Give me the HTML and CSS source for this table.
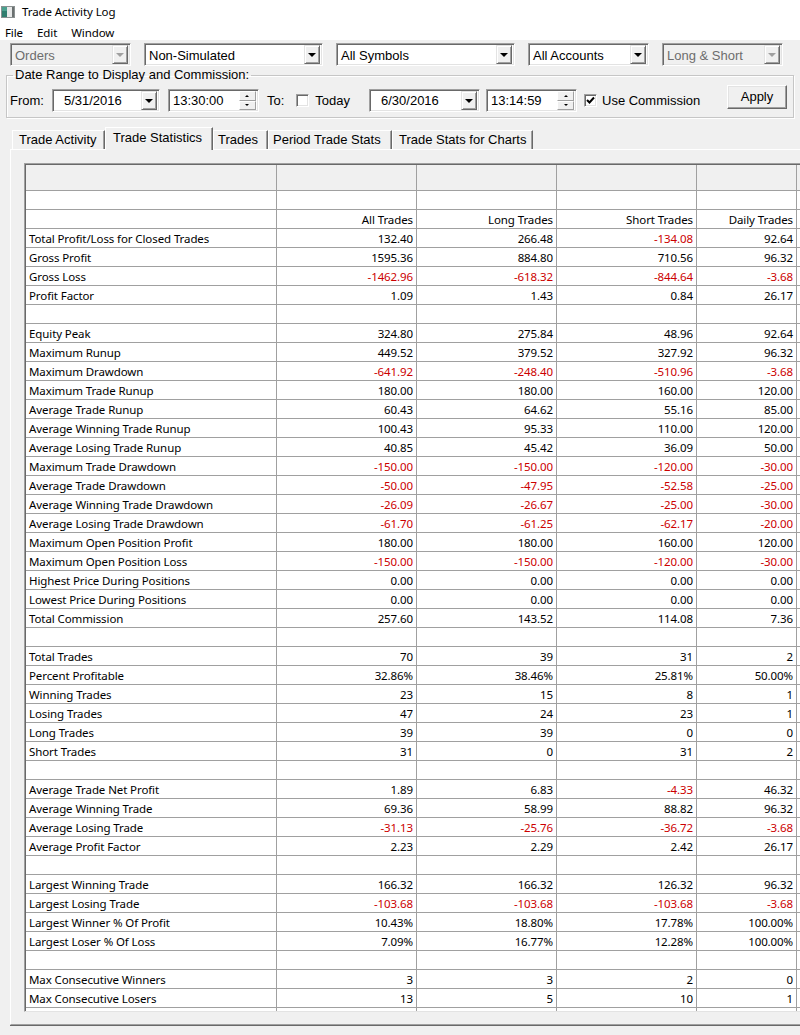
FILE: index.html
```html
<!DOCTYPE html>
<html>
<head>
<meta charset="utf-8">
<title>Trade Activity Log</title>
<link rel="stylesheet" href="styles.css">
</head>
<body>
<div class="titlebar">
  <svg class="app-icon" width="14" height="12" viewBox="0 0 14 12">
    <rect x="0.5" y="0.5" width="13" height="11" fill="#e6e8e8" stroke="#8a9090"/>
    <rect x="1" y="1" width="5" height="10" fill="#2f7d6e"/>
    <rect x="1" y="1" width="5" height="4" fill="#4aa08e"/>
    <rect x="11" y="1" width="2" height="10" fill="#6a7070"/>
  </svg>
  <span class="title">Trade Activity Log</span>
</div>
<div class="menubar">
  <span class="menu-item">File</span>
  <span class="menu-item">Edit</span>
  <span class="menu-item">Window</span>
</div>

<div class="filters">
  <div class="combo disabled w-orders"><span class="combo-text">Orders</span><span class="drop"><i class="tri"></i></span></div>
  <div class="combo w-wide"><span class="combo-text">Non-Simulated</span><span class="drop"><i class="tri"></i></span></div>
  <div class="combo w-wide"><span class="combo-text">All Symbols</span><span class="drop"><i class="tri"></i></span></div>
  <div class="combo w-narrow"><span class="combo-text">All Accounts</span><span class="drop"><i class="tri"></i></span></div>
  <div class="combo disabled w-narrow"><span class="combo-text">Long &amp; Short</span><span class="drop"><i class="tri"></i></span></div>
</div>

<fieldset class="range">
  <legend>Date Range to Display and Commission:</legend>
  <div class="range-row">
    <span class="lbl from">From:</span>
    <div class="field date d1"><span class="val">5/31/2016</span><span class="drop"><i class="tri"></i></span></div>
    <div class="field time t1"><span class="val">13:30:00</span><span class="spin"><span class="spin-btn"><i class="up"></i></span><span class="spin-btn"><i class="down"></i></span></span></div>
    <span class="lbl to">To:</span>
    <span class="check cb-today"></span>
    <span class="lbl today">Today</span>
    <div class="field date d2"><span class="val">6/30/2016</span><span class="drop"><i class="tri"></i></span></div>
    <div class="field time t2"><span class="val">13:14:59</span><span class="spin"><span class="spin-btn"><i class="up"></i></span><span class="spin-btn"><i class="down"></i></span></span></div>
    <span class="check checked cb-comm"><svg width="9" height="9" viewBox="0 0 9 9"><path d="M1 4 L3.5 6.5 L8 1.5" fill="none" stroke="#000" stroke-width="2"/></svg></span>
    <span class="lbl comm">Use Commission</span>
    <button class="apply">Apply</button>
  </div>
</fieldset>

<div class="tabs">
  <span class="tab tab-activity">Trade Activity</span>
  <span class="tab active tab-stats">Trade Statistics</span>
  <span class="tab tab-trades">Trades</span>
  <span class="tab tab-period">Period Trade Stats</span>
  <span class="tab tab-charts">Trade Stats for Charts</span>
</div>

<div class="panel">
  <div class="frame">
    <div class="row hdr"><span class="c"></span><span class="c"></span><span class="c"></span><span class="c"></span><span class="c"></span><span class="c"></span></div>
    <div class="row"><span class="c"></span><span class="c"></span><span class="c"></span><span class="c"></span><span class="c"></span><span class="c"></span></div>
    <div class="row"><span class="c l"></span><span class="c">All Trades</span><span class="c">Long Trades</span><span class="c">Short Trades</span><span class="c">Daily Trades</span><span class="c"></span></div>
    <div class="row"><span class="c l">Total Profit/Loss for Closed Trades</span><span class="c">132.40</span><span class="c">266.48</span><span class="c neg">-134.08</span><span class="c">92.64</span><span class="c"></span></div>
    <div class="row"><span class="c l">Gross Profit</span><span class="c">1595.36</span><span class="c">884.80</span><span class="c">710.56</span><span class="c">96.32</span><span class="c"></span></div>
    <div class="row"><span class="c l">Gross Loss</span><span class="c neg">-1462.96</span><span class="c neg">-618.32</span><span class="c neg">-844.64</span><span class="c neg">-3.68</span><span class="c"></span></div>
    <div class="row"><span class="c l">Profit Factor</span><span class="c">1.09</span><span class="c">1.43</span><span class="c">0.84</span><span class="c">26.17</span><span class="c"></span></div>
    <div class="row"><span class="c"></span><span class="c"></span><span class="c"></span><span class="c"></span><span class="c"></span><span class="c"></span></div>
    <div class="row"><span class="c l">Equity Peak</span><span class="c">324.80</span><span class="c">275.84</span><span class="c">48.96</span><span class="c">92.64</span><span class="c"></span></div>
    <div class="row"><span class="c l">Maximum Runup</span><span class="c">449.52</span><span class="c">379.52</span><span class="c">327.92</span><span class="c">96.32</span><span class="c"></span></div>
    <div class="row"><span class="c l">Maximum Drawdown</span><span class="c neg">-641.92</span><span class="c neg">-248.40</span><span class="c neg">-510.96</span><span class="c neg">-3.68</span><span class="c"></span></div>
    <div class="row"><span class="c l">Maximum Trade Runup</span><span class="c">180.00</span><span class="c">180.00</span><span class="c">160.00</span><span class="c">120.00</span><span class="c"></span></div>
    <div class="row"><span class="c l">Average Trade Runup</span><span class="c">60.43</span><span class="c">64.62</span><span class="c">55.16</span><span class="c">85.00</span><span class="c"></span></div>
    <div class="row"><span class="c l">Average Winning Trade Runup</span><span class="c">100.43</span><span class="c">95.33</span><span class="c">110.00</span><span class="c">120.00</span><span class="c"></span></div>
    <div class="row"><span class="c l">Average Losing Trade Runup</span><span class="c">40.85</span><span class="c">45.42</span><span class="c">36.09</span><span class="c">50.00</span><span class="c"></span></div>
    <div class="row"><span class="c l">Maximum Trade Drawdown</span><span class="c neg">-150.00</span><span class="c neg">-150.00</span><span class="c neg">-120.00</span><span class="c neg">-30.00</span><span class="c"></span></div>
    <div class="row"><span class="c l">Average Trade Drawdown</span><span class="c neg">-50.00</span><span class="c neg">-47.95</span><span class="c neg">-52.58</span><span class="c neg">-25.00</span><span class="c"></span></div>
    <div class="row"><span class="c l">Average Winning Trade Drawdown</span><span class="c neg">-26.09</span><span class="c neg">-26.67</span><span class="c neg">-25.00</span><span class="c neg">-30.00</span><span class="c"></span></div>
    <div class="row"><span class="c l">Average Losing Trade Drawdown</span><span class="c neg">-61.70</span><span class="c neg">-61.25</span><span class="c neg">-62.17</span><span class="c neg">-20.00</span><span class="c"></span></div>
    <div class="row"><span class="c l">Maximum Open Position Profit</span><span class="c">180.00</span><span class="c">180.00</span><span class="c">160.00</span><span class="c">120.00</span><span class="c"></span></div>
    <div class="row"><span class="c l">Maximum Open Position Loss</span><span class="c neg">-150.00</span><span class="c neg">-150.00</span><span class="c neg">-120.00</span><span class="c neg">-30.00</span><span class="c"></span></div>
    <div class="row"><span class="c l">Highest Price During Positions</span><span class="c">0.00</span><span class="c">0.00</span><span class="c">0.00</span><span class="c">0.00</span><span class="c"></span></div>
    <div class="row"><span class="c l">Lowest Price During Positions</span><span class="c">0.00</span><span class="c">0.00</span><span class="c">0.00</span><span class="c">0.00</span><span class="c"></span></div>
    <div class="row"><span class="c l">Total Commission</span><span class="c">257.60</span><span class="c">143.52</span><span class="c">114.08</span><span class="c">7.36</span><span class="c"></span></div>
    <div class="row"><span class="c"></span><span class="c"></span><span class="c"></span><span class="c"></span><span class="c"></span><span class="c"></span></div>
    <div class="row"><span class="c l">Total Trades</span><span class="c">70</span><span class="c">39</span><span class="c">31</span><span class="c">2</span><span class="c"></span></div>
    <div class="row"><span class="c l">Percent Profitable</span><span class="c">32.86%</span><span class="c">38.46%</span><span class="c">25.81%</span><span class="c">50.00%</span><span class="c"></span></div>
    <div class="row"><span class="c l">Winning Trades</span><span class="c">23</span><span class="c">15</span><span class="c">8</span><span class="c">1</span><span class="c"></span></div>
    <div class="row"><span class="c l">Losing Trades</span><span class="c">47</span><span class="c">24</span><span class="c">23</span><span class="c">1</span><span class="c"></span></div>
    <div class="row"><span class="c l">Long Trades</span><span class="c">39</span><span class="c">39</span><span class="c">0</span><span class="c">0</span><span class="c"></span></div>
    <div class="row"><span class="c l">Short Trades</span><span class="c">31</span><span class="c">0</span><span class="c">31</span><span class="c">2</span><span class="c"></span></div>
    <div class="row"><span class="c"></span><span class="c"></span><span class="c"></span><span class="c"></span><span class="c"></span><span class="c"></span></div>
    <div class="row"><span class="c l">Average Trade Net Profit</span><span class="c">1.89</span><span class="c">6.83</span><span class="c neg">-4.33</span><span class="c">46.32</span><span class="c"></span></div>
    <div class="row"><span class="c l">Average Winning Trade</span><span class="c">69.36</span><span class="c">58.99</span><span class="c">88.82</span><span class="c">96.32</span><span class="c"></span></div>
    <div class="row"><span class="c l">Average Losing Trade</span><span class="c neg">-31.13</span><span class="c neg">-25.76</span><span class="c neg">-36.72</span><span class="c neg">-3.68</span><span class="c"></span></div>
    <div class="row"><span class="c l">Average Profit Factor</span><span class="c">2.23</span><span class="c">2.29</span><span class="c">2.42</span><span class="c">26.17</span><span class="c"></span></div>
    <div class="row"><span class="c"></span><span class="c"></span><span class="c"></span><span class="c"></span><span class="c"></span><span class="c"></span></div>
    <div class="row"><span class="c l">Largest Winning Trade</span><span class="c">166.32</span><span class="c">166.32</span><span class="c">126.32</span><span class="c">96.32</span><span class="c"></span></div>
    <div class="row"><span class="c l">Largest Losing Trade</span><span class="c neg">-103.68</span><span class="c neg">-103.68</span><span class="c neg">-103.68</span><span class="c neg">-3.68</span><span class="c"></span></div>
    <div class="row"><span class="c l">Largest Winner % Of Profit</span><span class="c">10.43%</span><span class="c">18.80%</span><span class="c">17.78%</span><span class="c">100.00%</span><span class="c"></span></div>
    <div class="row"><span class="c l">Largest Loser % Of Loss</span><span class="c">7.09%</span><span class="c">16.77%</span><span class="c">12.28%</span><span class="c">100.00%</span><span class="c"></span></div>
    <div class="row"><span class="c"></span><span class="c"></span><span class="c"></span><span class="c"></span><span class="c"></span><span class="c"></span></div>
    <div class="row"><span class="c l">Max Consecutive Winners</span><span class="c">3</span><span class="c">3</span><span class="c">2</span><span class="c">0</span><span class="c"></span></div>
    <div class="row"><span class="c l">Max Consecutive Losers</span><span class="c">13</span><span class="c">5</span><span class="c">10</span><span class="c">1</span><span class="c"></span></div>
    <div class="row"><span class="c"></span><span class="c"></span><span class="c"></span><span class="c"></span><span class="c"></span><span class="c"></span></div>
  </div>
</div>
</body>
</html>
```

FILE: styles.css
```css
* { box-sizing: border-box; }

html, body {
  margin: 0;
  padding: 0;
}

body {
  width: 800px;
  height: 1035px;
  overflow: hidden;
  background: #f0f0f0;
  font-family: "Liberation Sans", Arial, sans-serif;
  font-size: 13px;
  color: #000;
}

/* ---------- title & menu ---------- */
.titlebar {
  height: 22px;
  background: #fff;
  display: flex;
  align-items: center;
  padding-top: 1px;
  font-family: "Noto Sans", "Open Sans", sans-serif;
  font-size: 11.5px;
  letter-spacing: -0.1px;
}

.app-icon {
  margin-left: 1px;
  margin-top: 1px;
  flex: none;
}

.title {
  margin-left: 7px;
}

.menubar {
  height: 18px;
  background: #fff;
  display: flex;
  align-items: center;
  gap: 14px;
  padding: 2px 0 0 5px;
  font-family: "Noto Sans", "Open Sans", sans-serif;
  font-size: 11.5px;
  letter-spacing: -0.1px;
}

/* ---------- combos ---------- */
.filters {
  display: flex;
  gap: 13px;
  padding: 3px 0 0 10px;
}

.combo,
.field {
  height: 23px;
  display: flex;
  align-items: center;
  background: #fff;
  border: 1px solid;
  border-color: #a0a0a0 #fff #fff #a0a0a0;
  box-shadow: inset 1px 1px 0 #696969, inset -1px -1px 0 #e3e3e3;
  padding: 0 2px 0 1px;
}

.combo.disabled {
  background: #f0f0f0;
  color: #6d6d6d;
}

.w-orders { width: 121px; }
.w-wide { width: 179px; }
.w-narrow { width: 121px; }

.combo-text {
  flex: 1;
  padding: 1px 0 0 3px;
  white-space: nowrap;
  line-height: 17px;
}

.drop {
  width: 16px;
  height: 19px;
  margin-left: auto;
  flex: none;
  display: flex;
  align-items: center;
  justify-content: center;
  background: #f0f0f0;
  border: 1px solid;
  border-color: #e3e3e3 #696969 #696969 #e3e3e3;
  box-shadow: inset 1px 1px 0 #fff, inset -1px -1px 0 #a0a0a0;
}

.tri {
  display: block;
  width: 0;
  height: 0;
  border-left: 4px solid transparent;
  border-right: 4px solid transparent;
  border-top: 4px solid #000;
  margin-top: 1px;
}

.disabled .tri {
  border-top-color: #a0a0a0;
}

/* ---------- date range group ---------- */
.range {
  margin: 1px 0 0 6px;
  width: 788px;
  padding: 0;
  border: 1px solid #c6c6c6;
  box-shadow: inset 1px 1px 0 #fff, 1px 1px 0 #fff;
}

.range legend {
  margin-left: 6px;
  padding: 0 2px;
  line-height: 16px;
  font-size: 13px;
}

.range-row {
  display: flex;
  align-items: center;
  height: 34px;
  padding: 6px 0 5px 3px;
}

.lbl {
  white-space: nowrap;
}

.from { margin-right: 8px; }

.field .val {
  flex: 1;
  white-space: nowrap;
  line-height: 17px;
}

.date .val { padding-left: 10px; }
.time .val { padding-left: 3px; }

.d1 { width: 108px; }
.t1 { width: 91px; margin-left: 8px; }
.to { margin-left: 8px; }
.cb-today { margin-left: 12px; }
.today { margin-left: 6px; }
.d2 { width: 111px; margin-left: 19px; }
.t2 { width: 91px; margin-left: 6px; }
.cb-comm { margin-left: 7px; }
.comm { margin-left: 5px; }

.spin {
  margin-left: auto;
  width: 17px;
  height: 19px;
  display: flex;
  flex-direction: column;
  flex: none;
}

.spin-btn {
  flex: 1;
  display: flex;
  align-items: center;
  justify-content: center;
  background: #f0f0f0;
  border: 1px solid;
  border-color: #fff #a0a0a0 #a0a0a0 #fff;
}

.spin .up {
  display: block;
  width: 0;
  height: 0;
  border-left: 2px solid transparent;
  border-right: 2px solid transparent;
  border-bottom: 2px solid #000;
}

.spin .down {
  display: block;
  width: 0;
  height: 0;
  border-left: 2px solid transparent;
  border-right: 2px solid transparent;
  border-top: 2px solid #000;
}

.check {
  width: 13px;
  height: 13px;
  flex: none;
  background: #fff;
  border: 1px solid;
  border-color: #a0a0a0 #fff #fff #a0a0a0;
  box-shadow: inset 1px 1px 0 #696969, inset -1px -1px 0 #e3e3e3;
  display: flex;
  align-items: center;
  justify-content: center;
}

.check svg {
  display: block;
}

.apply {
  align-self: flex-start;
  margin: -4px 6px 0 auto;
  width: 60px;
  height: 24px;
  padding: 0 0 1px 0;
  font-family: "Liberation Sans", Arial, sans-serif;
  font-size: 13px;
  color: #000;
  background: #f0f0f0;
  border: 1px solid;
  border-color: #fff #696969 #696969 #fff;
  box-shadow: inset -1px -1px 0 #a0a0a0, inset 1px 1px 0 #e3e3e3;
}

/* ---------- tabs ---------- */
.tabs {
  display: flex;
  align-items: flex-end;
  height: 22px;
  margin-top: 9px;
  padding-left: 12px;
}

.tab {
  height: 19px;
  line-height: 17px;
  text-align: left;
  white-space: nowrap;
  background: #f0f0f0;
  border-top: 1px solid #fff;
  border-left: 1px solid #fff;
  border-right: 1px solid #696969;
  box-shadow: inset -1px 0 0 #a0a0a0;
}

.tab-activity { width: 93px; padding-left: 6px; }
.tab-stats { width: 108px; padding-left: 7px; }
.tab-trades { width: 55px; padding-left: 4px; }
.tab-period { width: 124px; padding-left: 4px; }
.tab-charts { width: 141px; padding-left: 6px; }

.tab.active {
  height: 23px;
  line-height: 19px;
  margin-bottom: -1px;
  position: relative;
  z-index: 1;
}

/* ---------- panel & grid ---------- */
.panel {
  margin-left: 10px;
  width: 800px;
  height: 876px;
  border-top: 1px solid #fff;
  border-left: 1px solid #fff;
  border-bottom: 1px solid #a0a0a0;
  box-shadow: 0 1px 0 #696969;
  padding: 13px 0 0 13px;
}

.frame {
  width: 790px;
  height: 849px;
  overflow: hidden;
  background: #fff;
  border-top: 1px solid #a0a0a0;
  border-left: 1px solid #a0a0a0;
  border-bottom: 1px solid #e3e3e3;
  box-shadow: inset 1px 1px 0 #696969;
  padding: 1px 0 0 1px;
  font-family: "Noto Sans", "Open Sans", sans-serif;
  font-size: 11.5px;
  letter-spacing: -0.1px;
}

.row {
  display: grid;
  grid-template-columns: 251px 140px 140px 140px 100px 160px;
  height: 19px;
}

.row.hdr {
  height: 26px;
  background: #f0f0f0;
}

.c {
  border-right: 1px solid #a0a0a0;
  border-bottom: 1px solid #a0a0a0;
  padding: 0 3px;
  line-height: 20px;
  text-align: right;
  white-space: nowrap;
  overflow: hidden;
}

.c.l {
  text-align: left;
}

.c.neg {
  color: #cc0000;
}
```
